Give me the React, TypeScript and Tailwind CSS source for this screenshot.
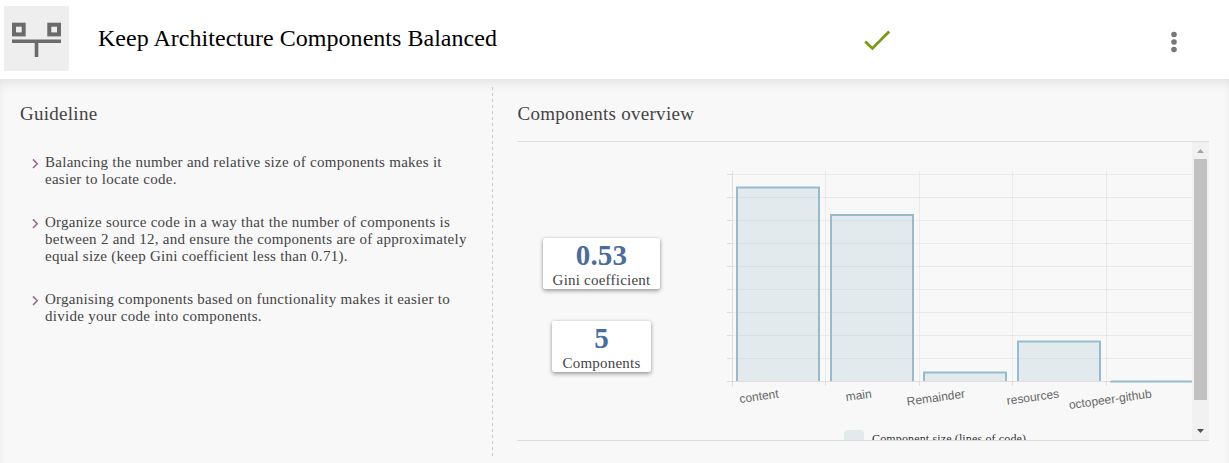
import React from "react";

const SERIF = "font-['Liberation_Serif',serif]";

const guidelines: string[][] = [
  ["Balancing the number and relative size of components makes it", "easier to locate code."],
  [
    "Organize source code in a way that the number of components is",
    "between 2 and 12, and ensure the components are of approximately",
    "equal size (keep Gini coefficient less than 0.71).",
  ],
  ["Organising components based on functionality makes it easier to", "divide your code into components."],
];

const gridRows = [174, 197, 220, 243, 266, 289, 312, 335, 358];
const gridCols = [825, 919, 1012, 1106];

const bars = [
  { label: "content", left: 737, right: 819, top: 187.5, labelX: 779 },
  { label: "main", left: 831, right: 913, top: 215, labelX: 872 },
  { label: "Remainder", left: 924, right: 1006, top: 372.5, labelX: 965.5 },
  { label: "resources", left: 1018, right: 1100, top: 341.5, labelX: 1059.5 },
  { label: "octopeer-github", left: 1111, right: 1193, top: 381.4, labelX: 1152 },
];

function BalanceIcon() {
  return (
    <svg width="65" height="65" viewBox="0 0 65 65" fill="none" stroke="#6b6b6b">
      <rect x="10" y="18.7" width="9.7" height="9.7" strokeWidth="4" />
      <rect x="45.3" y="18.7" width="9.7" height="9.7" strokeWidth="4" />
      <path d="M8 35.2H57" strokeWidth="3.6" />
      <path d="M32.5 36V51" strokeWidth="3.6" />
    </svg>
  );
}

function Stat({ value, label, className }: { value: string; label: string; className: string }) {
  return (
    <div
      className={`flex h-[51px] flex-col items-center rounded-[2px] bg-white shadow-[0_2px_4px_rgba(0,0,0,0.35),0_0_3px_rgba(0,0,0,0.12)] ${className}`}
    >
      <span className="h-[35px] text-[29px] leading-[35px] font-bold tracking-[0.2px] text-[#4a6c9f]">{value}</span>
      <span className="text-[15px] leading-[15px] tracking-[0.22px] whitespace-nowrap">{label}</span>
    </div>
  );
}

function Chart() {
  return (
    <svg width="470" height="298" viewBox="722 142 470 298" className="block shrink-0">
      <g stroke="#000" strokeOpacity="0.05">
        {gridRows.map((y) => (
          <path key={y} d={`M733 ${y + 0.5}H1192`} />
        ))}
        {gridCols.map((x) => (
          <path key={x} d={`M${x + 0.5} 171V385`} />
        ))}
      </g>
      <g stroke="#000" strokeOpacity="0.1">
        {gridRows.map((y) => (
          <path key={y} d={`M727 ${y + 0.5}H732`} />
        ))}
        {gridCols.map((x) => (
          <path key={x} d={`M${x + 0.5} 382V386`} strokeOpacity="0.06" />
        ))}
        <path d="M732.5 171V386M727 381.5H1192" />
      </g>
      {bars.map((b) => (
        <g key={b.label}>
          <path d={`M${b.left} 381V${b.top}H${b.right}V381`} fill="#97bbcd" fillOpacity="0.22" stroke="#97bbcd" strokeWidth="2" />
          <text
            transform={`translate(${b.labelX} 397.5) rotate(-8)`}
            textAnchor="end"
            fill="#666"
            className="font-['Liberation_Sans',sans-serif] text-[12px]"
          >
            {b.label}
          </text>
        </g>
      ))}
      <rect x="844" y="430" width="20" height="20" rx="4" fill="#e2eaed" />
      <text x="872" y="443" fill="#333" className="font-['Liberation_Serif',serif] text-[12px] tracking-[0.14px]">
        Component size (lines of code)
      </text>
    </svg>
  );
}

function Scrollbar() {
  return (
    <div className="flex w-[17px] shrink-0 flex-col items-center bg-[#f1f1f1]">
      <svg width="17" height="17" viewBox="0 0 17 17" fill="#a3a3a3">
        <path d="M5 11L8.5 7L12 11Z" />
      </svg>
      <div className="h-[241px] w-[13px] bg-[#c1c1c1]" />
      <svg width="17" height="17" viewBox="0 0 17 17" fill="#505050" className="mt-auto">
        <path d="M5 6L8.5 10L12 6Z" />
      </svg>
    </div>
  );
}

export default function App() {
  return (
    <div className={`flex h-[463px] w-[1229px] flex-col overflow-hidden bg-white text-[#444] ${SERIF}`}>
      <header className="flex h-[79px] shrink-0 items-start pt-[6px] pl-[4px]">
        <div className="size-[65px] bg-[#eee]">
          <BalanceIcon />
        </div>
        <h1 className="mt-[18px] ml-[29px] w-[766px] text-[24px] leading-[28px] tracking-[0.03px] whitespace-nowrap text-black">
          Keep Architecture Components Balanced
        </h1>
        <svg width="28" height="24" viewBox="864 28 28 24" fill="none" stroke="#7b9a13" strokeWidth="2.8" className="mt-[22px]">
          <path d="M865.2 41.4L872.4 48.4L889.2 31.5" />
        </svg>
        <svg width="8" height="24" viewBox="0 0 8 24" fill="#777" className="mt-[24px] ml-[278px]">
          <circle cx="4" cy="4.5" r="2.8" />
          <circle cx="4" cy="12" r="2.8" />
          <circle cx="4" cy="19.5" r="2.8" />
        </svg>
      </header>
      <main className="flex h-[404px] shrink-0 bg-[#f8f8f8] pt-[8px] shadow-[inset_0_8px_14px_-6px_rgba(0,0,0,0.1),inset_0_0_8px_rgba(0,0,0,0.02)]">
        <section className="w-[492px] shrink-0 pt-[16px] pl-[20px]">
          <h2 className="text-[19px] leading-[22px] tracking-[0.27px]">Guideline</h2>
          <ul className="mt-[29px] flex flex-col gap-[26px] pl-[12px]">
            {guidelines.map((lines) => (
              <li key={lines[0]} className="flex">
                <svg width="13" height="17" viewBox="0 0 13 17" fill="none" stroke="#a0688c" strokeWidth="1.6" className="shrink-0">
                  <path d="M1 5.4L5.2 9.7L1 14" />
                </svg>
                <p className="text-[15px] leading-[17px] tracking-[0.27px] whitespace-nowrap">
                  {lines.map((l) => (
                    <span key={l} className="block">
                      {l}
                    </span>
                  ))}
                </p>
              </li>
            ))}
          </ul>
        </section>
        <div className="h-[370px] w-px shrink-0 bg-[repeating-linear-gradient(to_bottom,#c8c8c8_0px,#c8c8c8_3px,transparent_3px,transparent_6px)]" />
        <section className="ml-[24px] w-[692px] shrink-0 pt-[16px]">
          <h2 className="pl-[0.5px] text-[19px] leading-[22px] tracking-[0.27px]">Components overview</h2>
          <div className="mt-[16px] flex h-[300px] overflow-hidden border-y border-[#ddd]">
            <div className="flex w-[205px] shrink-0 flex-col items-start gap-[32px] pt-[96px]">
              <Stat value="0.53" label="Gini coefficient" className="ml-[26px] w-[117px]" />
              <Stat value="5" label="Components" className="ml-[35px] w-[99px]" />
            </div>
            <Chart />
            <Scrollbar />
          </div>
        </section>
      </main>
    </div>
  );
}
